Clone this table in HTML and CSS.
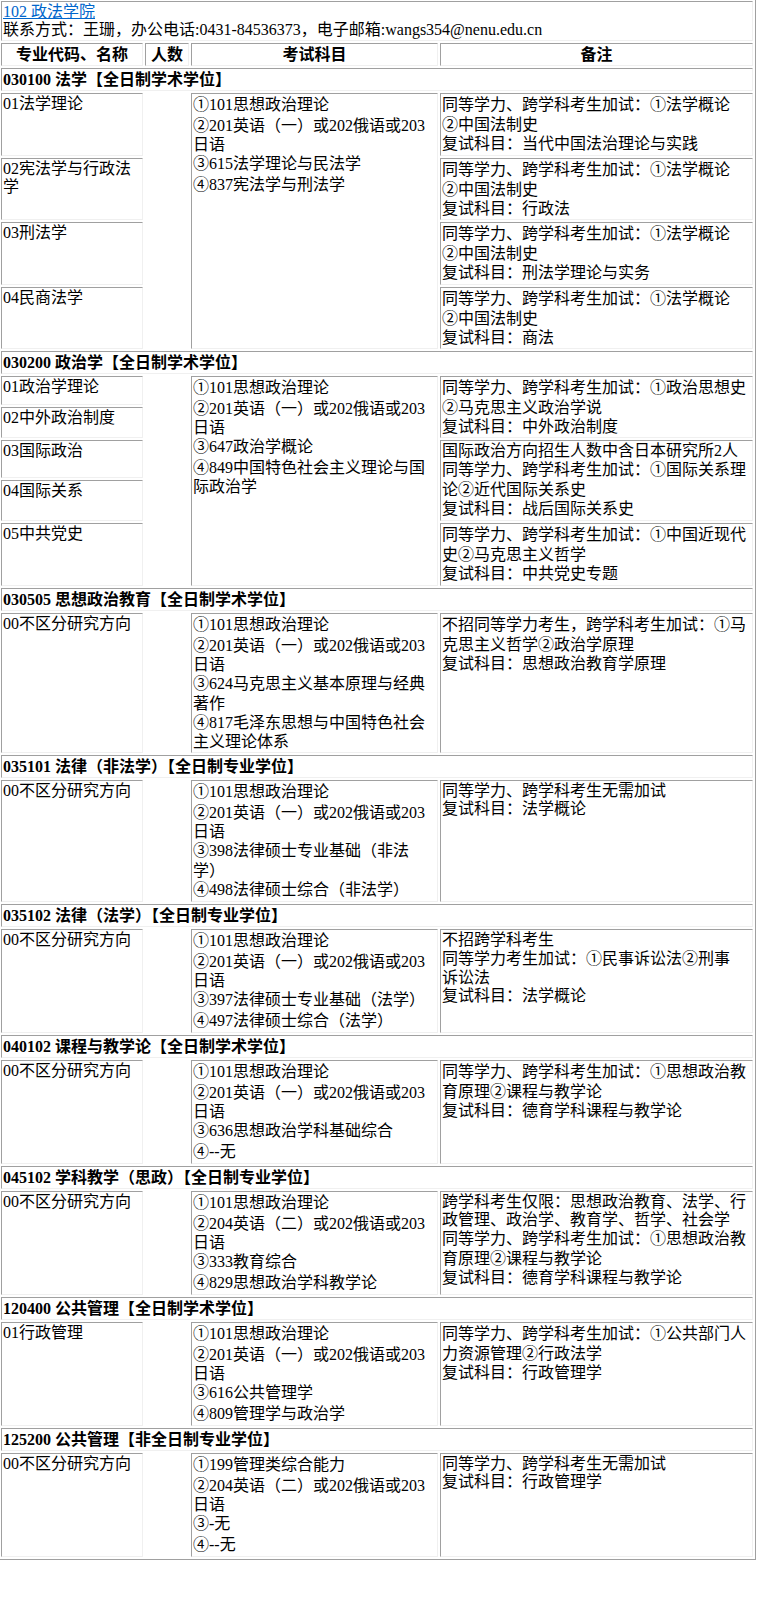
FILE: index.html
```html
<!DOCTYPE html>
<html lang="zh-CN">
<head>
<meta charset="utf-8">
<title>102 政法学院</title>
<link rel="stylesheet" href="styles.css">
</head>
<body>
<table class="plan">
<colgroup><col class="c1"><col class="c2"><col class="c3"><col class="c4"></colgroup>
<tbody>
<tr><td colspan="4" class="title"><a href="#">102 政法学院</a><br>联系方式：王珊，办公电话:0431-84536373，电子邮箱:wangs354@nenu.edu.cn</td></tr>
<tr><th>专业代码、名称</th><th>人数</th><th>考试科目</th><th>备注</th></tr>

<tr><td colspan="4" class="sec">030100 法学【全日制学术学位】</td></tr>
<tr>
<td class="h63">01法学理论</td><td rowspan="4"></td>
<td rowspan="4"><span class="n">①</span>101思想政治理论<br><span class="n">②</span>201英语（一）或202俄语或203<br>日语<br><span class="n">③</span>615法学理论与民法学<br><span class="n">④</span>837宪法学与刑法学</td>
<td class="rm">同等学力、跨学科考生加试：<span class="n">①</span>法学概论<br><span class="n">②</span>中国法制史<br>复试科目：当代中国法治理论与实践</td>
</tr>
<tr><td class="h62">02宪法学与行政法<br>学</td><td class="rm">同等学力、跨学科考生加试：<span class="n">①</span>法学概论<br><span class="n">②</span>中国法制史<br>复试科目：行政法</td></tr>
<tr><td class="h63">03刑法学</td><td class="rm">同等学力、跨学科考生加试：<span class="n">①</span>法学概论<br><span class="n">②</span>中国法制史<br>复试科目：刑法学理论与实务</td></tr>
<tr><td class="h62">04民商法学</td><td class="rm">同等学力、跨学科考生加试：<span class="n">①</span>法学概论<br><span class="n">②</span>中国法制史<br>复试科目：商法</td></tr>

<tr><td colspan="4" class="sec">030200 政治学【全日制学术学位】</td></tr>
<tr>
<td class="r1">01政治学理论</td><td rowspan="5"></td>
<td rowspan="5"><span class="n">①</span>101思想政治理论<br><span class="n">②</span>201英语（一）或202俄语或203<br>日语<br><span class="n">③</span>647政治学概论<br><span class="n">④</span>849中国特色社会主义理论与国<br>际政治学</td>
<td rowspan="2" class="rm">同等学力、跨学科考生加试：<span class="n">①</span>政治思想史<br><span class="n">②</span>马克思主义政治学说<br>复试科目：中外政治制度</td>
</tr>
<tr><td class="r2">02中外政治制度</td></tr>
<tr><td class="r3">03国际政治</td><td rowspan="2" class="rm">国际政治方向招生人数中含日本研究所2人<br>同等学力、跨学科考生加试：<span class="n">①</span>国际关系理<br>论<span class="n">②</span>近代国际关系史<br>复试科目：战后国际关系史</td></tr>
<tr><td class="r4">04国际关系</td></tr>
<tr><td class="h63">05中共党史</td><td class="rm">同等学力、跨学科考生加试：<span class="n">①</span>中国近现代<br>史<span class="n">②</span>马克思主义哲学<br>复试科目：中共党史专题</td></tr>

<tr><td colspan="4" class="sec">030505 思想政治教育【全日制学术学位】</td></tr>
<tr>
<td>00不区分研究方向</td><td></td>
<td><span class="n">①</span>101思想政治理论<br><span class="n">②</span>201英语（一）或202俄语或203<br>日语<br><span class="n">③</span>624马克思主义基本原理与经典<br>著作<br><span class="n">④</span>817毛泽东思想与中国特色社会<br>主义理论体系</td>
<td class="rm">不招同等学力考生，跨学科考生加试：<span class="n">①</span>马<br>克思主义哲学<span class="n">②</span>政治学原理<br>复试科目：思想政治教育学原理</td>
</tr>

<tr><td colspan="4" class="sec">035101 法律（非法学）【全日制专业学位】</td></tr>
<tr>
<td>00不区分研究方向</td><td></td>
<td><span class="n">①</span>101思想政治理论<br><span class="n">②</span>201英语（一）或202俄语或203<br>日语<br><span class="n">③</span>398法律硕士专业基础（非法<br>学）<br><span class="n">④</span>498法律硕士综合（非法学）</td>
<td class="rm">同等学力、跨学科考生无需加试<br>复试科目：法学概论</td>
</tr>

<tr><td colspan="4" class="sec">035102 法律（法学）【全日制专业学位】</td></tr>
<tr>
<td>00不区分研究方向</td><td></td>
<td><span class="n">①</span>101思想政治理论<br><span class="n">②</span>201英语（一）或202俄语或203<br>日语<br><span class="n">③</span>397法律硕士专业基础（法学）<br><span class="n">④</span>497法律硕士综合（法学）</td>
<td class="rm">不招跨学科考生<br>同等学力考生加试：<span class="n">①</span>民事诉讼法<span class="n">②</span>刑事<br>诉讼法<br>复试科目：法学概论</td>
</tr>

<tr><td colspan="4" class="sec">040102 课程与教学论【全日制学术学位】</td></tr>
<tr>
<td>00不区分研究方向</td><td></td>
<td><span class="n">①</span>101思想政治理论<br><span class="n">②</span>201英语（一）或202俄语或203<br>日语<br><span class="n">③</span>636思想政治学科基础综合<br><span class="n">④</span>--无</td>
<td class="rm">同等学力、跨学科考生加试：<span class="n">①</span>思想政治教<br>育原理<span class="n">②</span>课程与教学论<br>复试科目：德育学科课程与教学论</td>
</tr>

<tr><td colspan="4" class="sec">045102 学科教学（思政）【全日制专业学位】</td></tr>
<tr>
<td>00不区分研究方向</td><td></td>
<td><span class="n">①</span>101思想政治理论<br><span class="n">②</span>204英语（二）或202俄语或203<br>日语<br><span class="n">③</span>333教育综合<br><span class="n">④</span>829思想政治学科教学论</td>
<td class="rm">跨学科考生仅限：思想政治教育、法学、行<br>政管理、政治学、教育学、哲学、社会学<br>同等学力、跨学科考生加试：<span class="n">①</span>思想政治教<br>育原理<span class="n">②</span>课程与教学论<br>复试科目：德育学科课程与教学论</td>
</tr>

<tr><td colspan="4" class="sec">120400 公共管理【全日制学术学位】</td></tr>
<tr>
<td>01行政管理</td><td></td>
<td><span class="n">①</span>101思想政治理论<br><span class="n">②</span>201英语（一）或202俄语或203<br>日语<br><span class="n">③</span>616公共管理学<br><span class="n">④</span>809管理学与政治学</td>
<td class="rm">同等学力、跨学科考生加试：<span class="n">①</span>公共部门人<br>力资源管理<span class="n">②</span>行政法学<br>复试科目：行政管理学</td>
</tr>

<tr><td colspan="4" class="sec">125200 公共管理【非全日制专业学位】</td></tr>
<tr>
<td>00不区分研究方向</td><td></td>
<td><span class="n">①</span>199管理类综合能力<br><span class="n">②</span>204英语（二）或202俄语或203<br>日语<br><span class="n">③</span>-无<br><span class="n">④</span>--无</td>
<td class="rm">同等学力、跨学科考生无需加试<br>复试科目：行政管理学</td>
</tr>
</tbody>
</table>
</body>
</html>
```

FILE: styles.css
```css
html, body {
  margin: 0;
  padding: 0;
  background: #ffffff;
}

body {
  font-family: "Liberation Serif", "Noto Sans CJK SC", serif;
  font-size: 16px;
  color: #000000;
}

.plan {
  width: 758px;
  margin: -2px 0 0 -2px;
  table-layout: fixed;
  border-collapse: separate;
  border-spacing: 2px;
  empty-cells: hide;
  border: 1px solid;
  border-color: #f0f0f0 #a0a0a0 #a0a0a0 #f0f0f0;
}

.c1 { width: 142px; }
.c2 { width: 44px; }
.c3 { width: 247px; }
.c4 { width: 313px; }

.plan td,
.plan th {
  box-sizing: border-box;
  border: 1px solid;
  border-color: #a0a0a0 #f0f0f0 #f0f0f0 #a0a0a0;
  padding: 1px;
  line-height: 18px;
  vertical-align: top;
  text-align: left;
  white-space: nowrap;
  overflow: hidden;
}

.plan th {
  font-weight: bold;
  text-align: center;
  vertical-align: middle;
  line-height: 19px;
}

.plan .sec {
  font-weight: bold;
  line-height: 19px;
}

.plan .h62 { height: 62px; }
.plan .h63 { height: 63px; }
.plan .r1 { height: 29px; }
.plan .r2 { height: 31px; }
.plan .r3 { height: 38px; }
.plan .r4 { height: 41px; }

.title a {
  color: #0066cc;
  text-decoration: underline;
}

.n {
  line-height: 20.5px;
}

.rm .n {
  line-height: 20px;
}
```
